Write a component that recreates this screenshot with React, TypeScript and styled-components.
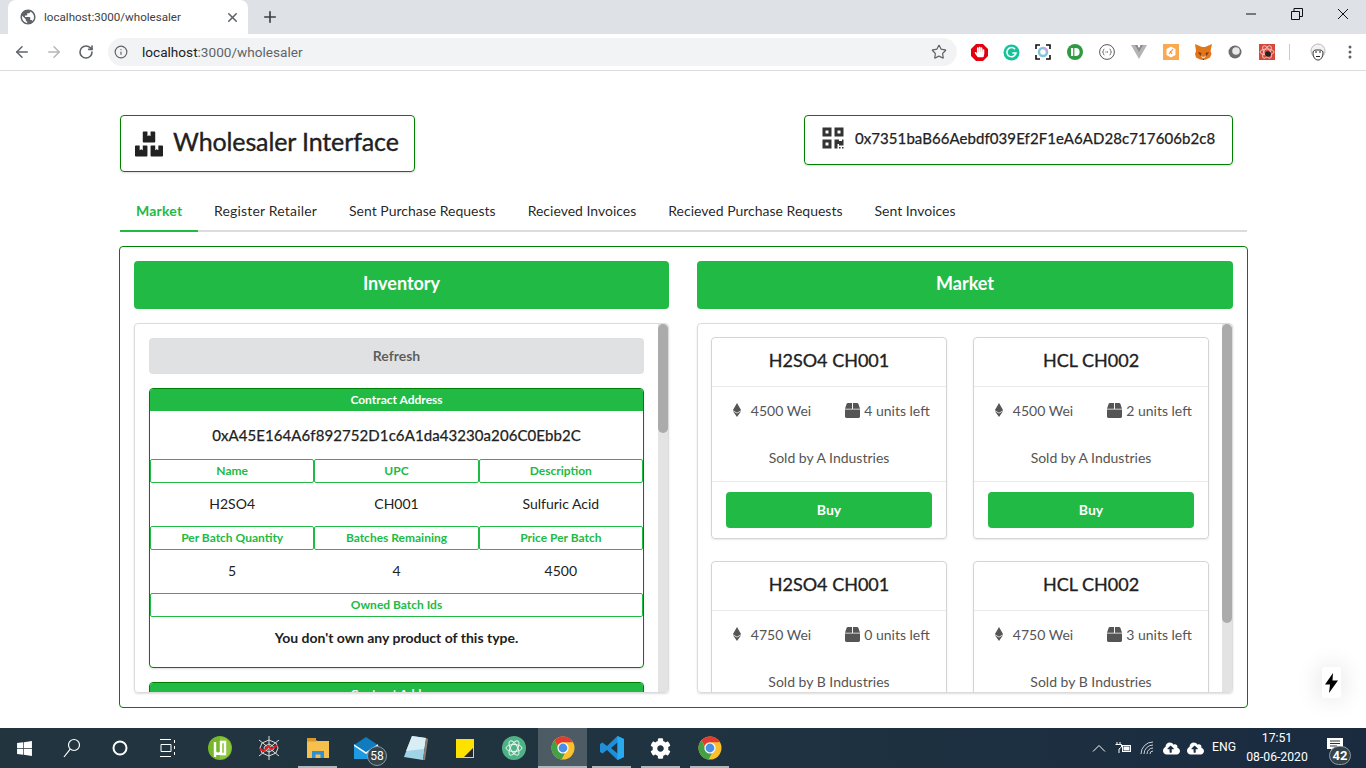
import React from "react";
import styled, { createGlobalStyle } from "styled-components";
import { ArrowLeft, ArrowRight, Info, Plus, RotateCw, Star, X } from "lucide-react";
import { FaBox, FaBoxes, FaCloudUploadAlt, FaCog, FaEthereum, FaHandPaper, FaQrcode, FaWindows } from "react-icons/fa";
import { MdPublic } from "react-icons/md";

const GREEN = "#21ba45";
const DARK_GREEN = "#008000";
const CHROME_FONT = 'Roboto, "Noto Sans", sans-serif';

const GlobalStyle = createGlobalStyle`
  html, body {
    margin: 0;
    padding: 0;
    height: 768px;
    overflow: hidden;
    background: #fff;
    font-family: "Lato", "Liberation Sans", sans-serif;
    font-size: 14px;
    color: rgba(0, 0, 0, 0.87);
  }
  * { box-sizing: border-box; }
`;

const Screen = styled.div`
  position: relative;
  width: 1366px;
  height: 768px;
  display: flex;
  flex-direction: column;
`;

/* browser chrome */
const TabStrip = styled.div`
  height: 34px;
  background: #dee1e6;
  display: flex;
  align-items: stretch;
  padding-left: 8px;
  flex: none;
`;

const BrowserTab = styled.div`
  width: 240px;
  background: #fff;
  border-radius: 8px 8px 0 0;
  display: flex;
  align-items: center;
  padding: 0 8px 0 11px;
  color: #3c4043;
  font-family: ${CHROME_FONT};
  font-size: 11.6px;
  gap: 7px;
  svg { flex: none; color: #5f6368; }
`;

const TabTitle = styled.span`
  flex: 1;
`;

const NewTab = styled.div`
  width: 44px;
  display: flex;
  align-items: center;
  justify-content: center;
  color: #3c4043;
`;

const WindowControls = styled.div`
  margin-left: auto;
  display: flex;
`;

const WindowButton = styled.div`
  width: 46px;
  display: flex;
  align-items: center;
  justify-content: center;
  padding-bottom: 7px;
  color: #111;
`;

const Toolbar = styled.div`
  height: 37px;
  background: #fff;
  border-bottom: 1px solid #dadce0;
  display: flex;
  align-items: center;
  padding-left: 6px;
  flex: none;
`;

const NavButton = styled.div<{ $dim?: boolean }>`
  width: 32px;
  height: 28px;
  display: flex;
  align-items: center;
  justify-content: center;
  color: ${(p) => (p.$dim ? "#b4b6b9" : "#5f6368")};
`;

const UrlPill = styled.div`
  width: 849px;
  height: 28px;
  margin: 0 6px 0 6px;
  border-radius: 14px;
  background: #f1f3f4;
  display: flex;
  align-items: center;
  padding: 0 10px 0 5px;
  font-family: ${CHROME_FONT};
  font-size: 13.6px;
  color: #5f6368;
`;

const UrlIcon = styled.div`
  width: 16px;
  margin-right: 13px;
  display: flex;
  justify-content: center;
  color: #5f6368;
`;

const UrlHost = styled.span`
  color: #202124;
`;

const UrlStar = styled.div`
  margin-left: auto;
  display: flex;
  color: #5f6368;
`;

const ExtButton = styled.div`
  width: 32px;
  height: 28px;
  display: flex;
  align-items: center;
  justify-content: center;
`;

const ToolSeparator = styled.div`
  width: 1px;
  height: 16px;
  background: #c8cacd;
  margin: 0 12px 0 6px;
`;

/* page */
const Page = styled.main`
  flex: 1;
  min-height: 0;
  padding: 44px 118px 0 119px;
`;

const TitleRow = styled.div`
  display: flex;
  justify-content: space-between;
  align-items: flex-start;
  padding: 0 15px 0 1px;
`;

const TitleBox = styled.div`
  height: 57px;
  width: 295px;
  border: 1px solid ${DARK_GREEN};
  border-radius: 4px;
  display: flex;
  align-items: center;
  gap: 10px;
  padding-left: 14px;
  box-shadow: 0 1px 2px rgba(34, 36, 38, 0.15);
`;

const Title = styled.h1`
  margin: 0 0 5px;
  font-size: 25px;
  font-weight: 400;
  letter-spacing: -0.12px;
  -webkit-text-stroke: 0.35px #212121;
  color: #212121;
  white-space: nowrap;
`;

const AddressBox = styled.div`
  height: 50px;
  width: 429px;
  border: 1px solid ${DARK_GREEN};
  border-radius: 4px;
  display: flex;
  align-items: flex-start;
  gap: 10px;
  padding: 10px 0 0 16px;
  box-shadow: 0 1px 2px rgba(34, 36, 38, 0.15);
  color: #333;
`;

const WalletAddress = styled.span`
  margin-top: 1px;
  font-size: 15px;
  letter-spacing: 0.07px;
  -webkit-text-stroke: 0.25px #212121;
  line-height: 22px;
  color: #212121;
  white-space: nowrap;
`;

const TabMenu = styled.nav`
  margin: 18px 1px 0;
  height: 42px;
  border-bottom: 2px solid #dcdcdc;
  display: flex;
`;

const TabLink = styled.div<{ $active?: boolean }>`
  height: 42px;
  padding: 0 16px;
  display: flex;
  align-items: center;
  font-size: 14px;
  font-weight: ${(p) => (p.$active ? 700 : 400)};
  letter-spacing: ${(p) => (p.$active ? "0.2px" : "0")};
  color: ${(p) => (p.$active ? GREEN : "rgba(0,0,0,0.87)")};
  border-bottom: 2px solid ${(p) => (p.$active ? GREEN : "transparent")};
  white-space: nowrap;
  &:first-child { width: 78px; }
  &:nth-child(2) { letter-spacing: 0.18px; }
`;

const Panel = styled.section`
  margin-top: 14px;
  height: 462px;
  border: 1px solid ${DARK_GREEN};
  border-radius: 4px;
  padding: 14px;
  display: grid;
  grid-template-columns: 535px 536px;
  column-gap: 28px;
`;

const Column = styled.div`
  display: flex;
  flex-direction: column;
  gap: 14px;
  min-width: 0;
`;

const ColumnHeader = styled.div`
  height: 48px;
  padding-bottom: 4px;
  border-radius: 4px;
  background: ${GREEN};
  color: #fff;
  font-size: 18px;
  font-weight: 700;
  display: flex;
  align-items: center;
  justify-content: center;
  flex: none;
`;

const ScrollBox = styled.div`
  position: relative;
  height: 370px;
  border: 1px solid #dcdcdd;
  border-radius: 4px;
  box-shadow: 0 1px 2px rgba(34, 36, 38, 0.15);
  overflow: hidden;
`;

const ScrollContent = styled.div<{ $pad: string }>`
  padding: ${(p) => p.$pad};
`;

const ScrollTrack = styled.div`
  position: absolute;
  top: 0;
  right: 0;
  bottom: 0;
  width: 10px;
  background: #e3e3e3;
`;

const ScrollThumb = styled.div<{ $height: number }>`
  width: 10px;
  height: ${(p) => p.$height}px;
  background: #ababab;
  border-radius: 5px;
`;

const RefreshButton = styled.div`
  height: 36px;
  padding-bottom: 2px;
  border-radius: 4px;
  background: #e0e1e2;
  color: rgba(0, 0, 0, 0.6);
  font-weight: 700;
  font-size: 14px;
  display: flex;
  align-items: center;
  justify-content: center;
  margin-bottom: 14px;
`;

const ContractCard = styled.div`
  height: 280px;
  border: 1px solid ${DARK_GREEN};
  border-radius: 4px;
  margin-bottom: 14px;
  box-shadow: 0 1px 2px rgba(34, 36, 38, 0.15);
  overflow: hidden;
`;

const ContractHeader = styled.div`
  height: 22px;
  padding-bottom: 2px;
  background: ${GREEN};
  color: #fff;
  font-size: 12px;
  font-weight: 700;
  display: flex;
  align-items: center;
  justify-content: center;
`;

const ContractAddress = styled.div`
  height: 48px;
  display: flex;
  align-items: center;
  justify-content: center;
  font-size: 15px;
  letter-spacing: 0.08px;
  -webkit-text-stroke: 0.25px #212121;
  color: #212121;
`;

const FieldGrid = styled.div<{ $cols: number }>`
  display: grid;
  grid-template-columns: repeat(${(p) => p.$cols}, 1fr);
`;

const FieldLabel = styled.div`
  height: 24px;
  padding-bottom: 2px;
  border: 1px solid ${GREEN};
  border-radius: 2px;
  color: ${GREEN};
  font-size: 12px;
  font-weight: 700;
  display: flex;
  align-items: center;
  justify-content: center;
`;

const FieldValue = styled.div`
  height: 43px;
  padding-bottom: 2px;
  display: flex;
  align-items: center;
  justify-content: center;
  font-size: 14px;
  color: #212121;
`;

const EmptyNote = styled.div`
  height: 43px;
  padding-bottom: 2px;
  display: flex;
  align-items: center;
  justify-content: center;
  font-size: 14px;
  font-weight: 700;
  color: #212121;
`;

const CardGrid = styled.div`
  display: grid;
  grid-template-columns: 236px 236px;
  column-gap: 26px;
  row-gap: 22px;
`;

const ProductCard = styled.div`
  height: 202px;
  border: 1px solid #d4d4d5;
  border-radius: 4px;
  box-shadow: 0 1px 2px rgba(34, 36, 38, 0.1);
  display: flex;
  flex-direction: column;
`;

const ProductName = styled.div`
  height: 49px;
  padding-bottom: 4px;
  border-bottom: 1px solid #eaeaea;
  display: flex;
  align-items: center;
  justify-content: center;
  font-size: 18px;
  -webkit-text-stroke: 0.3px #212121;
  color: #212121;
  flex: none;
`;

const ProductBody = styled.div`
  height: 95px;
  border-bottom: 1px solid #eaeaea;
  color: #555;
  flex: none;
`;

const MetaRow = styled.div`
  height: 48px;
  padding-bottom: 2px;
  display: grid;
  grid-template-columns: 1fr 1fr;
`;

const MetaItem = styled.div`
  display: flex;
  align-items: center;
  justify-content: center;
  gap: 4px;
  svg { flex: none; }
`;

const EtherItem = styled(MetaItem)`
  gap: 7px;
`;

const SoldBy = styled.div`
  height: 46px;
  padding-bottom: 2px;
  display: flex;
  align-items: center;
  justify-content: center;
`;

const ProductFooter = styled.div`
  padding: 10px 14px 0;
`;

const BuyButton = styled.div`
  height: 36px;
  padding-bottom: 2px;
  border-radius: 4px;
  background: ${GREEN};
  color: #fff;
  font-weight: 700;
  display: flex;
  align-items: center;
  justify-content: center;
`;

const BoltBadge = styled.div`
  position: absolute;
  left: 1322px;
  top: 667px;
  width: 19px;
  height: 31px;
  background: #fff;
  border-radius: 3px;
  box-shadow: 0 0 26px rgba(0, 0, 0, 0.14);
  display: flex;
  align-items: center;
  justify-content: center;
`;

/* windows taskbar */
const Taskbar = styled.footer`
  height: 40px;
  flex: none;
  display: flex;
  background: linear-gradient(90deg, #22353f 0%, #1f3340 50%, #1a2b40 100%);
  color: #fff;
  font-family: ${CHROME_FONT};
`;

const SystemSlot = styled.div`
  width: 48px;
  display: flex;
  align-items: center;
  justify-content: center;
  color: #fff;
`;

const AppList = styled.div`
  display: flex;
  margin-left: 3px;
`;

const AppSlot = styled.div<{ $active?: boolean; $running?: boolean }>`
  position: relative;
  width: 49px;
  display: flex;
  align-items: center;
  justify-content: center;
  background: ${(p) => (p.$active ? "#4d5c64" : "transparent")};
  &::after {
    content: "";
    display: ${(p) => (p.$running || p.$active ? "block" : "none")};
    position: absolute;
    bottom: 0;
    left: ${(p) => (p.$active ? "0" : "5px")};
    right: ${(p) => (p.$active ? "0" : "5px")};
    height: 2px;
    background: #aeb7bc;
  }
`;

const CountBadge = styled.span<{ $large?: boolean }>`
  position: absolute;
  right: ${(p) => (p.$large ? "6px" : "4px")};
  bottom: ${(p) => (p.$large ? "3px" : "2px")};
  width: ${(p) => (p.$large ? "22px" : "20px")};
  height: ${(p) => (p.$large ? "19px" : "20px")};
  border-radius: 10px;
  border: 1px solid #8f9aa0;
  background: #35434b;
  color: #fff;
  font-size: ${(p) => (p.$large ? "13px" : "12px")};
  font-weight: ${(p) => (p.$large ? 700 : 400)};
  display: flex;
  align-items: center;
  justify-content: center;
`;

const Tray = styled.div`
  margin-left: auto;
  display: flex;
  align-items: stretch;
`;

const TraySlot = styled.div`
  width: 24px;
  display: flex;
  align-items: center;
  justify-content: center;
`;

const TrayLang = styled.div`
  width: 34px;
  display: flex;
  align-items: center;
  justify-content: center;
  font-size: 12.2px;
  padding-bottom: 2px;
`;

const Clock = styled.div`
  width: 72px;
  display: flex;
  flex-direction: column;
  align-items: center;
  justify-content: center;
  font-size: 12.2px;
  line-height: 19px;
`;

const NotifySlot = styled.div`
  position: relative;
  width: 44px;
  display: flex;
  align-items: center;
  justify-content: center;
  padding-bottom: 6px;
`;

const DesktopEdge = styled.div`
  width: 9px;
`;

function ChromeLogo() {
  return (
    <svg width="24" height="24" viewBox="0 0 24 24">
      <circle cx="12" cy="12" r="11.500" fill="#fbc02d" />
      <path d="M12 .5a11.500 11.500 0 0 1 10 5.800H12a5.700 5.700 0 0 0-5.400 3.800L3.500 4.300A11.500 11.500 0 0 1 12 .5z" fill="#e53935" />
      <path d="M3.500 4.300l4.700 9.500a5.700 5.700 0 0 0 5.700 3.500l-3.400 6.100A11.500 11.500 0 0 1 3.500 4.300z" fill="#43a047" />
      <circle cx="12" cy="12" r="5.600" fill="#fff" />
      <circle cx="12" cy="12" r="4.400" fill="#4a8fe7" />
    </svg>
  );
}

function Extensions() {
  return (
    <>
      <ExtButton>
        <svg width="17" height="17" viewBox="0 0 17 17">
          <path d="M5 0h7l5 5v7l-5 5H5l-5-5V5z" fill="#e3000f" />
          <FaHandPaper x="3" y="2.500" size={11} color="#fff" />
        </svg>
      </ExtButton>
      <ExtButton>
        <svg width="17" height="17" viewBox="0 0 17 17">
          <circle cx="8.500" cy="8.500" r="8" fill="#15c39a" />
          <path d="M12 5.200A4.600 4.600 0 1 0 13 9H9.400" fill="none" stroke="#fff" strokeWidth="1.600" />
        </svg>
      </ExtButton>
      <ExtButton>
        <svg width="16" height="16" viewBox="0 0 16 16">
          <path d="M1 5V1h4M11 1h4v4M15 11v4h-4M5 15H1v-4" fill="none" stroke="#111" strokeWidth="1.600" />
          <circle cx="8" cy="8" r="4" fill="none" stroke="#7fc4dc" strokeWidth="2.400" />
          <path d="M8 4a4 4 0 0 1 4 4" fill="none" stroke="#c3a6e8" strokeWidth="2.400" />
        </svg>
      </ExtButton>
      <ExtButton>
        <svg width="16" height="16" viewBox="0 0 16 16">
          <circle cx="8" cy="8" r="8" fill="#2f9a41" />
          <rect x="4" y="4" width="2.200" height="8" fill="#fff" />
          <path d="M7.400 4h1.200a4 4 0 0 1 0 8H7.400z" fill="#fff" />
        </svg>
      </ExtButton>
      <ExtButton>
        <svg width="16" height="16" viewBox="0 0 16 16">
          <circle cx="8" cy="8" r="7.400" fill="none" stroke="#555" strokeWidth="1" />
          <path d="M5.400 5Q4.300 5 4.400 6.500T3.400 8Q4.400 8 4.400 9.500T5.400 11M10.600 5Q11.700 5 11.600 6.500T12.600 8Q11.600 8 11.600 9.500T10.600 11" fill="none" stroke="#555" strokeWidth="0.800" />
          <path d="M6.500 8h3" stroke="#555" strokeWidth="1" strokeDasharray="1 .5" />
        </svg>
      </ExtButton>
      <ExtButton>
        <svg width="16" height="14" viewBox="0 0 16 14">
          <path d="M0 0h6l2 3.500L10 0h6L8 14z" fill="#b4b4b4" />
          <path d="M4 0h2.400L8 3.500 9.600 0H12L8 7z" fill="#8a8a8a" />
        </svg>
      </ExtButton>
      <ExtButton>
        <svg width="16" height="16" viewBox="0 0 16 16">
          <rect width="16" height="16" fill="#fba94f" />
          <path d="M8 2.500l4.500 2.600v5.800L8 13.500l-4.500-2.600V5.100z" fill="#fff" />
          <path d="M6 10l4-5M7 7l2 3" stroke="#f59331" strokeWidth="1.200" />
        </svg>
      </ExtButton>
      <ExtButton>
        <svg width="17" height="16" viewBox="0 0 17 16">
          <path d="M0 0l7 3h3l7-3-1.500 7 1 3-1.500 3.500-4 2-3 .5-3-.5-4-2L0 10l1-3z" fill="#e2761b" />
          <path d="M3 8l3.500 1L5.500 12zM14 8l-3.500 1 1 3z" fill="#763d16" />
          <path d="M6 12l2.500 3.500L11 12l-2.500 1z" fill="#f3e7da" />
          <path d="M7.500 14.500h2L8.500 16z" fill="#222" />
        </svg>
      </ExtButton>
      <ExtButton>
        <svg width="14" height="14" viewBox="0 0 14 14">
          <circle cx="7" cy="7" r="6.500" fill="#6c6c6c" />
          <circle cx="8" cy="6" r="3.800" fill="#e8e8e8" />
        </svg>
      </ExtButton>
      <ExtButton>
        <svg width="16" height="16" viewBox="0 0 16 16">
          <rect width="16" height="16" fill="#d5483c" />
          <g fill="none" stroke="#f7d4cf" strokeWidth="0.800">
            <ellipse cx="8" cy="8" rx="7" ry="3" />
            <ellipse cx="8" cy="8" rx="7" ry="3" transform="rotate(60 8 8)" />
            <ellipse cx="8" cy="8" rx="7" ry="3" transform="rotate(120 8 8)" />
          </g>
          <ellipse cx="9" cy="10" rx="3" ry="2.800" fill="#2a2020" />
        </svg>
      </ExtButton>
      <ToolSeparator />
      <ExtButton>
        <svg width="16" height="18" viewBox="0 0 16 18">
          <circle cx="8" cy="8" r="7" fill="#f2f2f2" stroke="#bbb" strokeWidth="1" />
          <path d="M3 9c0 6 2.500 8 5 8s5-2 5-8c-1-2-2-2-5-2s-4 0-5 2z" fill="#fff" stroke="#333" strokeWidth="1" />
          <path d="M5 9h2M9 9h2M6 13.500h4" stroke="#222" strokeWidth="1.200" />
        </svg>
      </ExtButton>
      <ExtButton>
        <svg width="4" height="14" viewBox="0 0 4 14">
          <circle cx="2" cy="2" r="1.500" fill="#5f6368" />
          <circle cx="2" cy="7" r="1.500" fill="#5f6368" />
          <circle cx="2" cy="12" r="1.500" fill="#5f6368" />
        </svg>
      </ExtButton>
    </>
  );
}

const products = [
  { name: "H2SO4 CH001", price: 4500, units: 4, seller: "A" },
  { name: "HCL CH002", price: 4500, units: 2, seller: "A" },
  { name: "H2SO4 CH001", price: 4750, units: 0, seller: "B" },
  { name: "HCL CH002", price: 4750, units: 3, seller: "B" },
];

const menu = [
  "Market",
  "Register Retailer",
  "Sent Purchase Requests",
  "Recieved Invoices",
  "Recieved Purchase Requests",
  "Sent Invoices",
];

function Contract() {
  return (
    <ContractCard>
      <ContractHeader>Contract Address</ContractHeader>
      <ContractAddress>0xA45E164A6f892752D1c6A1da43230a206C0Ebb2C</ContractAddress>
      <FieldGrid $cols={3}>
        <FieldLabel>Name</FieldLabel>
        <FieldLabel>UPC</FieldLabel>
        <FieldLabel>Description</FieldLabel>
        <FieldValue>H2SO4</FieldValue>
        <FieldValue>CH001</FieldValue>
        <FieldValue>Sulfuric Acid</FieldValue>
        <FieldLabel>Per Batch Quantity</FieldLabel>
        <FieldLabel>Batches Remaining</FieldLabel>
        <FieldLabel>Price Per Batch</FieldLabel>
        <FieldValue>5</FieldValue>
        <FieldValue>4</FieldValue>
        <FieldValue>4500</FieldValue>
      </FieldGrid>
      <FieldGrid $cols={1}>
        <FieldLabel>Owned Batch Ids</FieldLabel>
        <EmptyNote>You don't own any product of this type.</EmptyNote>
      </FieldGrid>
    </ContractCard>
  );
}

function App() {
  return (
    <Screen>
      <GlobalStyle />
      <TabStrip>
        <BrowserTab>
          <MdPublic size={18} />
          <TabTitle>localhost:3000/wholesaler</TabTitle>
          <X size={15} strokeWidth={2.5} />
        </BrowserTab>
        <NewTab>
          <Plus size={18} strokeWidth={2.2} />
        </NewTab>
        <WindowControls>
          <WindowButton>
            <svg width="12" height="12" viewBox="0 0 12 12">
              <path d="M1 6h10" stroke="currentColor" />
            </svg>
          </WindowButton>
          <WindowButton>
            <svg width="12" height="12" viewBox="0 0 12 12" fill="none">
              <path d="M.5 3.500h8v8h-8zM3 3.500V.5h8.500v8H8.500" stroke="currentColor" />
            </svg>
          </WindowButton>
          <WindowButton>
            <svg width="12" height="12" viewBox="0 0 12 12">
              <path d="M1 1l10 10M11 1L1 11" stroke="currentColor" />
            </svg>
          </WindowButton>
        </WindowControls>
      </TabStrip>
      <Toolbar>
        <NavButton>
          <ArrowLeft size={18} strokeWidth={2} />
        </NavButton>
        <NavButton $dim>
          <ArrowRight size={18} strokeWidth={2} />
        </NavButton>
        <NavButton>
          <RotateCw size={16} strokeWidth={2.4} />
        </NavButton>
        <UrlPill>
          <UrlIcon>
            <Info size={14} strokeWidth={2} />
          </UrlIcon>
          <UrlHost>localhost</UrlHost>:3000/wholesaler
          <UrlStar>
            <Star size={16} strokeWidth={1.8} />
          </UrlStar>
        </UrlPill>
        <Extensions />
      </Toolbar>

      <Page>
        <TitleRow>
          <TitleBox>
            <FaBoxes size={28} color="#212121" />
            <Title>Wholesaler Interface</Title>
          </TitleBox>
          <AddressBox>
            <FaQrcode size={24} />
            <WalletAddress>0x7351baB66Aebdf039Ef2F1eA6AD28c717606b2c8</WalletAddress>
          </AddressBox>
        </TitleRow>
        <TabMenu>
          {menu.map((item, i) => (
            <TabLink key={item} $active={i === 0}>
              {item}
            </TabLink>
          ))}
        </TabMenu>
        <Panel>
          <Column>
            <ColumnHeader>Inventory</ColumnHeader>
            <ScrollBox>
              <ScrollContent $pad="14px 24px 0 14px">
                <RefreshButton>Refresh</RefreshButton>
                <Contract />
                <Contract />
              </ScrollContent>
              <ScrollTrack>
                <ScrollThumb $height={109} />
              </ScrollTrack>
            </ScrollBox>
          </Column>
          <Column>
            <ColumnHeader>Market</ColumnHeader>
            <ScrollBox>
              <ScrollContent $pad="13px 23px 0 13px">
                <CardGrid>
                  {products.map((p, i) => (
                    <ProductCard key={i}>
                      <ProductName>{p.name}</ProductName>
                      <ProductBody>
                        <MetaRow>
                          <EtherItem>
                            <FaEthereum size={14} />
                            {p.price} Wei
                          </EtherItem>
                          <MetaItem>
                            <FaBox size={15} />
                            {p.units} units left
                          </MetaItem>
                        </MetaRow>
                        <SoldBy>Sold by {p.seller} Industries</SoldBy>
                      </ProductBody>
                      <ProductFooter>
                        <BuyButton>Buy</BuyButton>
                      </ProductFooter>
                    </ProductCard>
                  ))}
                </CardGrid>
              </ScrollContent>
              <ScrollTrack>
                <ScrollThumb $height={299} />
              </ScrollTrack>
            </ScrollBox>
          </Column>
        </Panel>
      </Page>

      <BoltBadge>
        <svg width="13" height="20" viewBox="0 0 13 20">
          <path d="M8 0L0 11.500h5L4 20l9-12.500H7.500z" fill="#000" />
        </svg>
      </BoltBadge>

      <Taskbar>
        <SystemSlot>
          <FaWindows size={17} />
        </SystemSlot>
        <SystemSlot>
          <svg width="18" height="20" viewBox="0 0 18 20" fill="none" stroke="#fff" strokeWidth="1.200">
            <circle cx="11" cy="7" r="5.500" />
            <path d="M7.200 11.200L1 19" />
          </svg>
        </SystemSlot>
        <SystemSlot>
          <svg width="16" height="16" viewBox="0 0 16 16">
            <circle cx="8" cy="8" r="6.500" fill="none" stroke="#fff" strokeWidth="2" />
          </svg>
        </SystemSlot>
        <SystemSlot>
          <svg width="16" height="18" viewBox="0 0 16 18" fill="none" stroke="#fff" strokeWidth="1">
            <path d="M0 .5h11M0 17.500h11M1 5.500h10v7H1zM14.500 1v3M14.500 7v3M14.500 13v3" />
          </svg>
        </SystemSlot>
        <AppList>
          <AppSlot>
            <svg width="24" height="24" viewBox="0 0 24 24">
              <circle cx="12" cy="12" r="12" fill="#76b82a" />
              <path d="M12 1a11 11 0 0 1 0 22z" fill="#8cc63f" />
              <path d="M7 6v9c0 3.500 5 3.500 6 1V6h4v12h-4v-2M7 15v6" fill="none" stroke="#fff" strokeWidth="2.400" />
            </svg>
          </AppSlot>
          <AppSlot>
            <svg width="26" height="26" viewBox="0 0 26 26" fill="none" stroke="#dcdcdc" strokeWidth="1">
              <path d="M13 1v24M3 5l20 16M23 5L3 21M13 5l7 3 2 5-2 5-7 3-7-3-2-5 2-5zM13 9l4 2 1 2-1 2-4 2-4-2-1-2 1-2z" />
              <path d="M4 14l4 2 4-5 3 3 7-4" stroke="#ec1c1c" strokeWidth="2" />
            </svg>
          </AppSlot>
          <AppSlot $running>
            <svg width="22" height="20" viewBox="0 0 22 20">
              <path d="M0 1h8l2 2h12v17H0z" fill="#f6c04d" />
              <rect x="0" y="0" width="9" height="3.500" fill="#d9972c" />
              <path d="M5 20v-7h12v7h-3.500v-3.500h-5V20z" fill="#2f8fd8" />
            </svg>
          </AppSlot>
          <AppSlot>
            <svg width="26" height="22" viewBox="0 0 26 22">
              <rect x="0" y="7" width="24" height="15" fill="#1e9ae0" />
              <path d="M0 8l12-8 12 8-12 7z" fill="#0f7cc0" />
              <path d="M0 8l12 8 12-8" fill="none" stroke="#fff" strokeWidth="1.500" />
            </svg>
            <CountBadge>58</CountBadge>
          </AppSlot>
          <AppSlot>
            <svg width="24" height="25" viewBox="0 0 24 25">
              <path d="M8 0l14 2-3 22-19-3z" fill="#9fd4e6" />
              <path d="M8 0l14 2-2 11L2 15z" fill="#d8eef4" />
              <path d="M22 2l2 1-3 21-2 0z" fill="#8c7f70" />
            </svg>
          </AppSlot>
          <AppSlot>
            <svg width="18" height="19" viewBox="0 0 18 19">
              <path d="M0 0h18v19H0z" fill="#ffe100" />
              <path d="M17 9v9H8z" fill="#272727" />
            </svg>
          </AppSlot>
          <AppSlot>
            <svg width="24" height="24" viewBox="0 0 24 24" fill="none">
              <circle cx="12" cy="12" r="12" fill="#4fb286" />
              <g stroke="#e8f6ee" strokeWidth="1">
                <ellipse cx="12" cy="12" rx="8" ry="3.500" />
                <ellipse cx="12" cy="12" rx="8" ry="3.500" transform="rotate(60 12 12)" />
                <ellipse cx="12" cy="12" rx="8" ry="3.500" transform="rotate(120 12 12)" />
              </g>
            </svg>
          </AppSlot>
          <AppSlot $active>
            <ChromeLogo />
          </AppSlot>
          <AppSlot $running>
            <svg width="24" height="24" viewBox="0 0 24 24">
              <path d="M17.500 0L24 3v18l-6.500 3L7 14l-4.500 3.500L0 16V8l2.500-1.500L7 10zM17.500 6.500L11 12l6.500 5.500z" fill="#1e8fd8" />
              <path d="M17.500 0L24 3v18l-6.500 3z" fill="#29a9ef" />
            </svg>
          </AppSlot>
          <AppSlot $running>
            <FaCog size={21} color="#fff" />
          </AppSlot>
          <AppSlot $running>
            <ChromeLogo />
          </AppSlot>
        </AppList>
        <Tray>
          <TraySlot>
            <svg width="14" height="8" viewBox="0 0 14 8" fill="none" stroke="#fff">
              <path d="M1 7.500l6-6 6 6" />
            </svg>
          </TraySlot>
          <TraySlot>
            <svg width="16" height="12" viewBox="0 0 16 12" fill="none" stroke="#fff">
              <path d="M2 0v2M5 0v2M.5 2.500h6V5L4 7v4" />
              <rect x="7.500" y="3.500" width="8" height="6" />
              <rect x="9" y="5" width="5" height="3" fill="#fff" />
            </svg>
          </TraySlot>
          <TraySlot>
            <svg width="15" height="14" viewBox="0 0 15 14" fill="none" stroke="#dfe3e6" strokeWidth="0.900">
              <path d="M1 13A12 12 0 0 1 13 1M4 13a9 9 0 0 1 9-9M7 13a6 6 0 0 1 6-6M10 13a3 3 0 0 1 3-3" />
            </svg>
          </TraySlot>
          <TraySlot>
            <FaCloudUploadAlt size={17} />
          </TraySlot>
          <TraySlot>
            <FaCloudUploadAlt size={17} />
          </TraySlot>
          <TrayLang>ENG</TrayLang>
          <Clock>
            <span>17:51</span>
            <span>08-06-2020</span>
          </Clock>
          <NotifySlot>
            <svg width="16" height="15" viewBox="0 0 16 15">
              <path d="M0 0h16v11H7l-3 3v-3H0z" fill="#fff" />
              <path d="M3 3h10M3 5.500h10M3 8h7" stroke="#24323f" />
            </svg>
            <CountBadge $large>42</CountBadge>
          </NotifySlot>
          <DesktopEdge />
        </Tray>
      </Taskbar>
    </Screen>
  );
}

export default App;
